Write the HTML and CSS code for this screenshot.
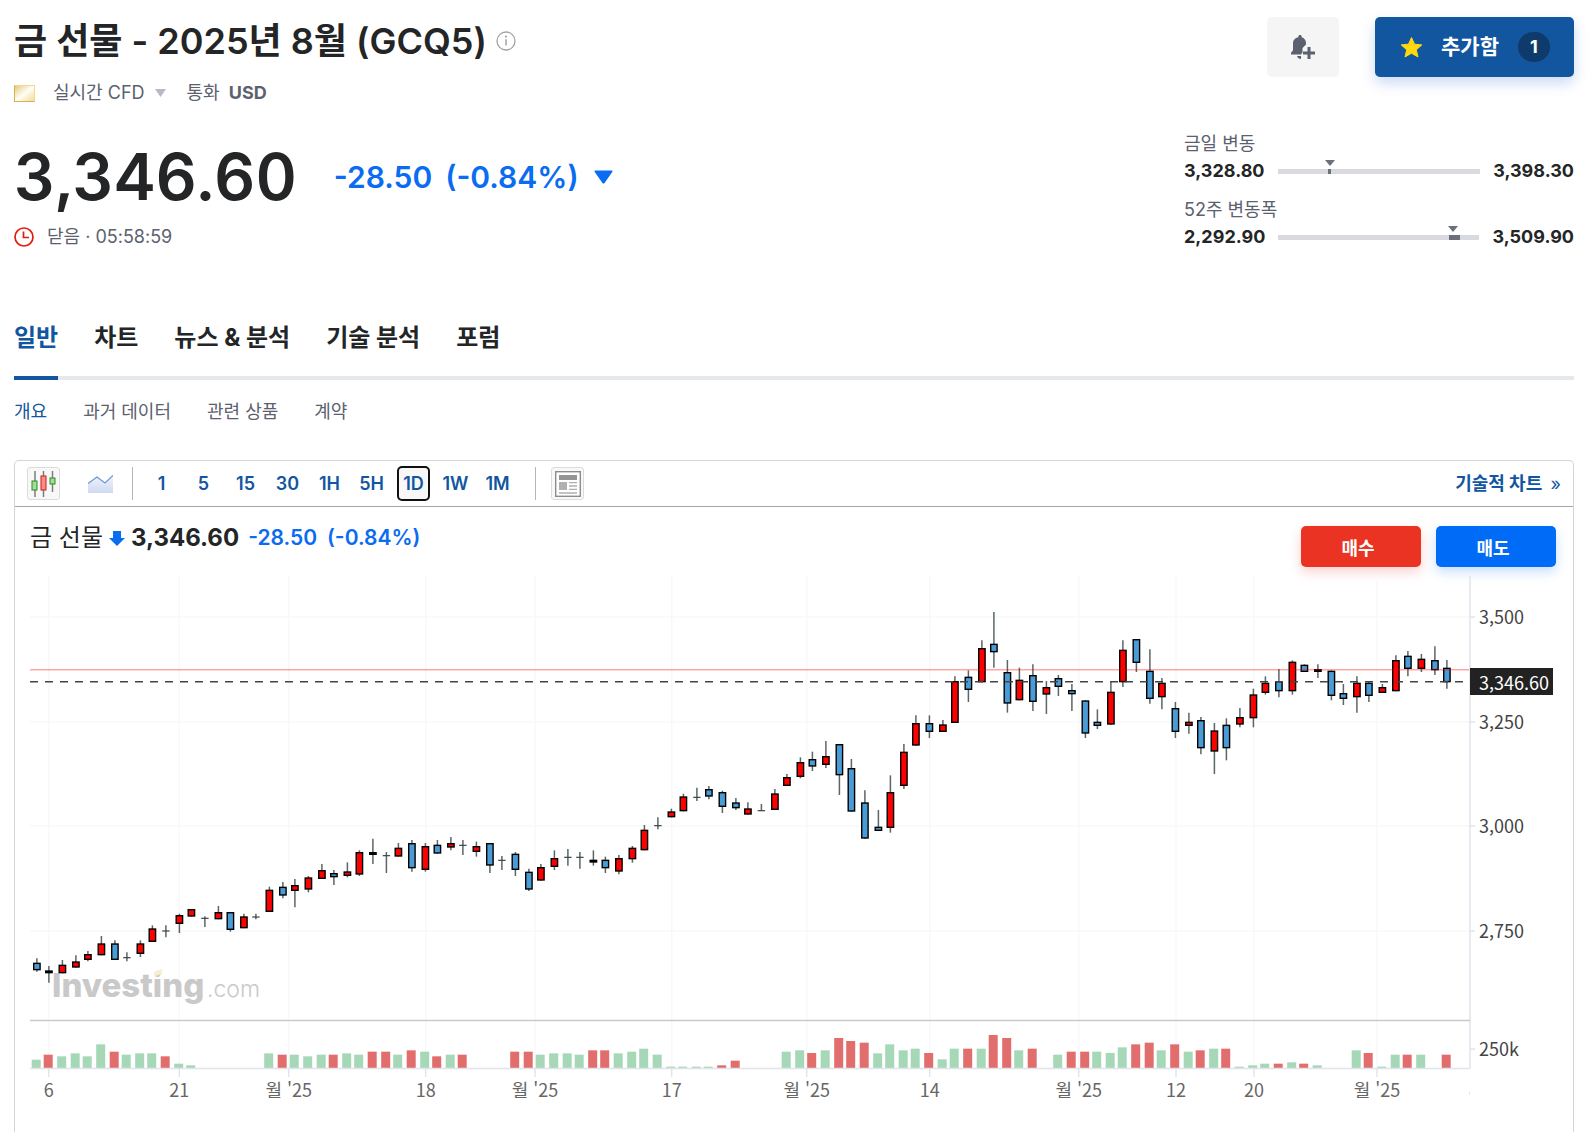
FILE: index.html
```html
<!DOCTYPE html>
<html lang="ko">
<head>
    <meta charset="UTF-8">
    <meta name="viewport" content="width=device-width, initial-scale=1.0">
    <title>금 선물 - 2025년 8월 (GCQ5)</title>
    <link rel="stylesheet" href="styles.css">
</head>
<body>
    <div class="page">
        <header class="top">
            <div class="instrument">
                <div class="title-row">
                    <h1>금 선물 - 2025년 8월 (GCQ5)</h1>
                    <svg class="info" viewBox="0 0 20 20" width="20" height="20">
                        <circle cx="10" cy="10" r="9" fill="none" stroke="#a3a3a3" stroke-width="1.3"/>
                        <circle cx="10" cy="5.6" r="1.1" fill="#a3a3a3"/>
                        <path d="M10 8.3v6.2" stroke="#a3a3a3" stroke-width="1.5"/>
                    </svg>
                </div>
                <div class="meta">
                    <svg class="gold" viewBox="0 0 21 17" width="21" height="17">
                        <defs>
                            <linearGradient id="gold" x1="0" y1="0" x2="1" y2="1">
                                <stop offset="0" stop-color="#e6c97c"/>
                                <stop offset=".5" stop-color="#fffdf6"/>
                                <stop offset="1" stop-color="#f3dc9c"/>
                            </linearGradient>
                        </defs>
                        <rect width="21" height="17" fill="#d3b25c"/>
                        <path d="M0 0h21v17l-1-1V1H1z" fill="#f3d98c"/>
                        <rect x="1" y="1" width="19" height="15" fill="url(#gold)"/>
                    </svg>
                    <button class="feed" type="button">실시간 CFD
                        <svg viewBox="0 0 11 8" width="11" height="8"><path d="M0 0h11L5.500 8z" fill="#b5bbc5"/></svg>
                    </button>
                    <span class="currency">통화 <b>USD</b></span>
                </div>
            </div>
            <div class="actions">
                <button class="alert-btn" type="button" aria-label="알림">
                    <svg viewBox="0 0 24 24" width="24" height="24" fill="#5b616e">
                        <path d="M9 0c1 0 1.700.7 1.700 1.700v.5c2.700.8 4.300 3 4.300 5.800v1.600L11.500 13v4.500l-1.500 2H0v-1.800l2-2.400V8c0-2.800 1.800-5 5.300-5.800v-.5C7.300.7 8 0 9 0z"/>
                        <path d="M6 21h4v3c-2 0-3.500-1.200-4-3z"/>
                        <path d="M16.500 12h3v4.500H24v3h-4.500V24h-3v-4.500H12v-3h4.500z"/>
                    </svg>
                </button>
                <button class="add-btn" type="button">
                    <svg viewBox="0 0 21 21" width="21" height="21"><path d="M10.500.5l3 6.700 7.300.7-5.500 4.900 1.700 7.200-6.500-3.800L4 20l1.700-7.200L.2 7.900l7.300-.7z" fill="#ffd90f" stroke="#ffd90f" stroke-linejoin="round"/></svg>
                    추가함
                    <span class="badge">1</span>
                </button>
            </div>
        </header>

        <section class="quote">
            <div>
                <div class="price-row">
                    <span class="price">3,346.60</span>
                    <span class="change"><span>-28.50</span><span>(-0.84%)</span></span>
                    <svg viewBox="0 0 19 14" width="19" height="14"><path d="M1 .5h17q1 .5.400 1.300L10.600 13q-1.100 1-2.200 0L.6 1.800Q0 1 1 .5z" fill="#0a6cf0"/></svg>
                </div>
                <div class="status">
                    <svg viewBox="0 0 20 20" width="20" height="20" fill="none" stroke="#e01b0c" stroke-width="1.700">
                        <circle cx="10" cy="10" r="9"/>
                        <path d="M9.500 4.500v6H15"/>
                    </svg>
                    닫음 · 05:58:59
                </div>
            </div>
            <div class="ranges">
                <div class="range">
                    <div class="range-label">금일 변동</div>
                    <div class="range-row">
                        <span>3,328.80</span>
                        <div class="bar"><i class="mark" style="left: 25%; width: 3px"></i><i class="caret" style="left: 26%"></i></div>
                        <span>3,398.30</span>
                    </div>
                </div>
                <div class="range">
                    <div class="range-label">52주 변동폭</div>
                    <div class="range-row">
                        <span>2,292.90</span>
                        <div class="bar"><i class="mark" style="left: 85%; width: 11px"></i><i class="caret" style="left: 87%"></i></div>
                        <span>3,509.90</span>
                    </div>
                </div>
            </div>
        </section>

        <nav class="tabs">
            <a class="active" href="#">일반</a>
            <a href="#">차트</a>
            <a href="#">뉴스 &amp; 분석</a>
            <a href="#">기술 분석</a>
            <a href="#">포럼</a>
        </nav>
        <nav class="subtabs">
            <a class="active" href="#">개요</a>
            <a href="#">과거 데이터</a>
            <a href="#">관련 상품</a>
            <a href="#">계약</a>
        </nav>

        <section class="card">
            <div class="toolbar">
                <button class="tool boxed" type="button" aria-label="캔들">
                    <svg viewBox="0 0 25 26" width="25" height="26">
                        <path d="M4 0v26M12.500 0v26M21.500 0v21" stroke="#7d7d7d" stroke-width="1.500"/>
                        <rect x="1" y="10" width="5" height="9" fill="#a5dc9b" stroke="#2a8a20"/>
                        <rect x="10" y="5" width="5" height="14" fill="#ff8b85" stroke="#c4211b"/>
                        <rect x="19" y="7" width="5" height="6" fill="#a5dc9b" stroke="#2a8a20"/>
                    </svg>
                </button>
                <button class="tool area" type="button" aria-label="영역">
                    <svg viewBox="0 0 25 18" width="25" height="18">
                        <defs>
                            <linearGradient id="area" x1="0" y1="0" x2="0" y2="1">
                                <stop offset="0" stop-color="#eef3fc"/>
                                <stop offset="1" stop-color="#cfdaf2"/>
                            </linearGradient>
                        </defs>
                        <path d="M0 8.500L9 2l8 6 8-7.500V18H0z" fill="url(#area)"/>
                        <path d="M0 8.500L9 2l8 6 8-7.500" fill="none" stroke="#6d97cc" stroke-width="1.200"/>
                    </svg>
                </button>
                <span class="divider"></span>
                <div class="frames">
                    <button type="button">1</button>
                    <button type="button">5</button>
                    <button type="button">15</button>
                    <button type="button">30</button>
                    <button type="button">1H</button>
                    <button type="button">5H</button>
                    <button class="selected" type="button">1D</button>
                    <button type="button">1W</button>
                    <button type="button">1M</button>
                </div>
                <span class="divider"></span>
                <button class="tool boxed" type="button" aria-label="뉴스">
                    <svg viewBox="0 0 26 26" width="26" height="26">
                        <rect x=".7" y=".7" width="24.600" height="24.600" fill="#fff" stroke="#8c8c8c" stroke-width="1.400"/>
                        <rect x="4" y="4" width="18" height="5" fill="#949494"/>
                        <rect x="4" y="11" width="8" height="8" fill="#b0b0b0"/>
                        <path d="M14 11.700h8M14 15h8M14 18.300h8M4 22h18" stroke="#b0b0b0" stroke-width="1.300"/>
                    </svg>
                </button>
                <a class="tech" href="#">기술적 차트 <span>»</span></a>
            </div>

            <div class="chart-head">
                <div class="chart-quote">
                    <span class="name">금 선물</span>
                    <svg viewBox="0 0 16 15" width="16" height="15"><path d="M4 0h8v7h4l-8 8-8-8h4z" fill="#0a6cf0"/></svg>
                    <span class="last">3,346.60</span>
                    <span class="diff"><span>-28.50</span><span>(-0.84%)</span></span>
                </div>
                <div class="trade">
                    <button class="buy" type="button">매수</button>
                    <button class="sell" type="button">매도</button>
                </div>
            </div>

            <svg class="chart" id="chart" viewBox="0 0 1526 555">
                <g id="grid"></g>
                <g class="watermark">
                    <text class="brand" x="22" y="421">Investing</text>
                    <text class="dotcom" x="177" y="421">.com</text>
                    <path d="M125 395l7-2v5l-7 2z" fill="#fdeccb"/>
                </g>
                <g id="candles"></g>
                <g id="volume"></g>
                <path d="M0 93.700H1440" stroke="#ff0000" stroke-opacity=".35" stroke-width="1.400"/>
                <path d="M0 105.700H1435" stroke="#444" stroke-width="1.400" stroke-dasharray="8 7"/>
                <g id="axes"></g>
                <rect x="1440" y="92" width="83" height="27" fill="#222"/>
                <text class="tag" x="1449" y="114">3,346.60</text>
            </svg>
        </section>
    </div>
    <script src="chart.js"></script>
</body>
</html>
```
FILE: styles.css
```css
* {
    box-sizing: border-box;
}
body {
    margin: 0;
    background: #fff;
    color: #232526;
    font-family: Inter, "Noto Sans CJK KR", sans-serif;
    font-size: 18px;
    line-height: 24px;
}
button {
    border: none;
    padding: 0;
    background: none;
    font: inherit;
    color: inherit;
    cursor: pointer;
}
a {
    color: inherit;
    text-decoration: none;
}
svg {
    display: block;
    flex: none;
}
.page {
    display: flex;
    flex-direction: column;
    min-height: 100vh;
    padding: 17px 19px 0 14px;
}

/* header */
.top {
    display: flex;
    justify-content: space-between;
    align-items: flex-start;
}
.title-row {
    display: flex;
    align-items: center;
    gap: 9px;
    height: 48px;
}
h1 {
    margin: 0;
    font-size: 36px;
    line-height: 48px;
    font-weight: 600;
}
.meta {
    display: flex;
    align-items: center;
    margin-top: 16px;
    color: #5b616e;
}
.feed {
    display: flex;
    align-items: center;
    gap: 10px;
    margin: 0 21px 0 18px;
}
.currency b {
    margin-left: 4px;
    font-weight: 700;
}
.actions {
    display: flex;
    gap: 36px;
}
.alert-btn {
    display: flex;
    align-items: center;
    justify-content: center;
    width: 72px;
    height: 60px;
    border-radius: 5px;
    background: #f5f5f5;
}
.add-btn {
    display: flex;
    align-items: center;
    gap: 19px;
    height: 60px;
    padding: 0 24px 0 26px;
    border-radius: 5px;
    background: #1256a0;
    box-shadow: 0 6px 14px rgba(18, 86, 200, 0.22);
    color: #fff;
    font-size: 21px;
    font-weight: 700;
}
.badge {
    width: 32px;
    height: 30px;
    border-radius: 15px;
    background: #0e3a6c;
    font-size: 18px;
    line-height: 30px;
}

/* price and ranges */
.quote {
    display: flex;
    justify-content: space-between;
    margin-top: 27px;
}
.price-row {
    display: flex;
    align-items: center;
    gap: 15px;
    height: 72px;
    margin-top: 9px;
}
.price {
    margin-right: 22px;
    font-size: 64px;
    font-weight: 600;
    font-variant-numeric: tabular-nums;
}
.change {
    display: flex;
    gap: 13px;
    color: #0a6cf0;
    font-size: 30px;
    font-weight: 600;
}
.status {
    display: flex;
    align-items: center;
    gap: 13px;
    margin-top: 12px;
    color: #5b616e;
}
.ranges {
    display: flex;
    flex-direction: column;
    gap: 12px;
    width: 390px;
}
.range-label {
    color: #5b616e;
}
.range-row {
    display: flex;
    align-items: center;
    justify-content: space-between;
    height: 30px;
    font-weight: 700;
}
.bar {
    position: relative;
    flex: 1;
    height: 5px;
    margin: 0 13px;
    background: #d9dadf;
}
.mark {
    position: absolute;
    top: 0;
    height: 5px;
    background: #6a707c;
}
.caret {
    position: absolute;
    top: -9px;
    margin-left: -5px;
    border: 5px solid transparent;
    border-top: 6px solid #6a707c;
    border-bottom: 0;
}

/* navigation */
.tabs {
    display: flex;
    gap: 36px;
    margin-top: 68px;
    border-bottom: 4px solid #e6e9eb;
    font-size: 24px;
    line-height: 36px;
    font-weight: 700;
}
.tabs a {
    padding-bottom: 20px;
}
.tabs .active {
    margin-bottom: -4px;
    border-bottom: 4px solid #1256a0;
    color: #1256a0;
}
.subtabs {
    display: flex;
    gap: 36px;
    margin-top: 20px;
    color: #5b616e;
}
.subtabs .active {
    color: #1256a0;
}

/* chart card */
.card {
    flex: 1;
    margin-top: 36px;
    border: 1px solid #d5d5d5;
    border-radius: 5px 5px 0 0;
    border-bottom: none;
}
.toolbar {
    display: flex;
    align-items: center;
    height: 46px;
    padding: 0 12px;
    border-bottom: 1px solid #a5a5a5;
    color: #1256a0;
    font-weight: 600;
}
.tool {
    display: flex;
    align-items: center;
    justify-content: center;
    width: 33px;
    height: 33px;
}
.boxed {
    border: 1px solid #dcdcdc;
    border-radius: 3px;
    background: #f8f8f8;
}
.area {
    margin: 0 15px 0 24px;
}
.divider {
    width: 1px;
    height: 33px;
    background: #b5b5b5;
}
.frames {
    display: flex;
    gap: 9px;
    margin: 0 21px 0 12px;
}
.frames button {
    width: 33px;
    height: 35px;
}
.frames .selected {
    border: 2px solid #111;
    border-radius: 5px;
    background: #f8f8f8;
}
.divider + .boxed {
    margin-left: 15px;
}
.tech {
    margin-left: auto;
    font-weight: 700;
}
.tech span {
    margin-left: 4px;
    font-weight: 400;
}
.chart-head {
    display: flex;
    justify-content: space-between;
    padding: 19px 17px 0 15px;
}
.chart-quote {
    display: flex;
    align-items: center;
    height: 24px;
}
.name {
    margin-right: 6px;
    font-size: 24px;
}
.last {
    margin: 0 9px 0 6px;
    font-size: 24px;
    font-weight: 700;
}
.diff {
    display: flex;
    gap: 10px;
    color: #0a6cf0;
    font-size: 21px;
    font-weight: 600;
}
.trade {
    display: flex;
    gap: 15px;
}
.trade button {
    width: 120px;
    height: 41px;
    padding: 4px 6px 0 0;
    border-radius: 5px;
    color: #fff;
    font-weight: 700;
}
.buy {
    background: #ea3323;
    box-shadow: 0 5px 12px rgba(234, 51, 35, 0.22);
}
.sell {
    background: #006bf7;
    box-shadow: 0 5px 12px rgba(0, 107, 247, 0.22);
}
.chart {
    width: calc(100% - 32px);
    margin: 9px 0 0 15px;
    font-family: "Noto Sans CJK KR", sans-serif;
    overflow: hidden;
}
.y-label {
    fill: #444;
}
.x-label {
    fill: #666;
    text-anchor: middle;
}
.tag {
    fill: #fff;
}
.watermark text {
    fill: #c9c9c9;
    font-family: Inter, sans-serif;
}
.watermark .brand {
    font-size: 33px;
    font-weight: 800;
}
.watermark .dotcom {
    font-size: 23px;
    font-weight: 300;
}
```
FILE: chart.js
```javascript
// candles: colour, high, body top, body bottom, low, volume colour, volume
// (r up, b down, k flat, + no body); distances are in thirds of a pixel
const rows = `
b 1147 1160 1183 1187 g 25|k 1170 1183 1192 1220 r 40|r 1152 1166 1192 1192 g 35|r 1138 1156 1175 1175 g 44
r 1125 1134 1152 1156 g 35|r 1080 1102 1138 1138 g 71|b 1093 1102 1152 1152 r 49|+ 1129 1145 1145 1156 g 40
r 1093 1102 1134 1143 g 44|r 1048 1057 1098 1098 g 44|+ 1048 1065 1065 1084 r 35|r 1013 1017 1044 1071 g 13
r 999 999 1022 1022 g 8|+ 1021 1027 1027 1053 g 0|r 990 1008 1030 1030 g 0|b 1008 1008 1062 1067 g 0
r 1013 1021 1057 1057 g 0|+ 1013 1023 1023 1030 g 0|r 932 941 1008 1008 g 44|b 918 932 959 967 r 40
r 909 927 945 994 g 40|r 900 904 941 949 g 35|r 864 882 909 909 g 40|b 882 891 904 927 r 40
r 859 886 900 904 g 44|r 823 828 896 900 g 40|k 788 828 837 864 r 49|+ 828 839 839 891 r 49
r 801 815 842 842 g 40|b 792 801 877 887 r 53|r 801 810 882 887 g 49|b 792 806 833 833 r 35
r 783 801 815 823 g 40|+ 792 808 808 837 r 40|r 797 810 828 842 g 0|b 801 801 869 891 g 0
+ 840 853 853 882 g 0|b 828 833 882 900 r 49|b 878 887 941 945 r 49|r 864 873 914 914 g 40
r 823 846 873 882 g 44|+ 819 844 844 869 g 44|+ 828 844 844 878 g 40|k 823 851 860 869 r 53
b 842 851 877 891 r 53|r 837 846 887 895 g 44|r 810 815 850 860 g 49|r 747 761 823 823 g 58
+ 724 749 749 760 g 40|r 698 706 724 724 g 4|r 653 661 706 706 g 4|+ 635 664 664 675 g 4
b 630 639 662 670 g 4|b 644 648 693 711 r 8|b 666 679 697 702 r 22|r 679 697 716 716 g 0
+ 684 704 704 704 g 0|r 639 652 702 702 g 0|r 594 603 630 630 g 49|r 544 558 603 607 g 53
b 527 549 572 585 r 45|r 495 540 567 576 g 53|b 504 504 598 657 r 90|b 549 576 707 707 r 81
b 643 679 788 788 r 76|b 702 752 765 765 g 44|r 598 648 756 770 g 71|r 504 527 630 639 g 53
r 418 441 509 509 g 58|b 418 441 468 486 r 45|r 432 445 468 468 g 26|r 301 315 441 441 g 58
b 283 302 342 378 r 58|r 193 216 319 319 g 58|b 108 203 229 275 r 99|b 252 288 383 410 r 90
r 275 311 373 373 g 53|b 265 297 378 405 r 58|r 315 333 356 414 g 0|b 297 306 333 360 g 40
b 324 342 355 405 r 49|b 373 373 473 486 r 49|b 400 437 450 459 g 49|r 315 347 446 446 g 45
r 193 221 319 333 g 62|b 189 189 261 288 r 71|b 220 284 369 383 r 76|r 306 320 364 400 g 53
b 378 396 468 486 r 71|r 410 437 450 473 g 49|b 423 432 517 535 r 53|r 441 463 527 594 g 58
b 427 446 517 553 r 58|r 396 423 446 454 g 4|r 338 355 427 454 g 8|r 301 320 351 356 g 13
b 279 315 346 364 r 13|r 253 257 346 356 g 17|b 265 266 288 288 r 13|k 265 279 288 306 g 8
b 283 284 360 373 g 0|b 324 351 369 387 g 0|r 301 320 364 410 g 53|b 315 320 360 378 r 45
r 324 333 351 351 g 4|r 238 252 346 346 g 40|b 225 239 279 301 r 40|r 234 248 279 288 g 40
b 211 252 283 297 g 0|b 252 275 319 338 r 40`.trim().split(/[|\n]/).map(r => r.split(" "));

const yTicks = [[41, "3,500"], [146, "3,250"], [250, "3,000"], [355, "2,750"]];
const xTicks = [
    [18.7, "6"], [149.3, "21"], [258.7, "월 '25"], [395.7, "18"], [505, "월 '25"], [641.7, "17"],
    [776.7, "월 '25"], [899.7, "14"], [1048.7, "월 '25"], [1146, "12"], [1224, "20"], [1347, "월 '25"]
];
const bodyColors = { r: "#ff0000", b: "#4a9cd6", k: "#000" };
const volumeBase = 492;

let candles = "", volume = "", grid = "", axes = "";

rows.forEach(([color, high, top, bottom, low, volColor, vol], i) => {
    const x = 6.9 + Math.floor(i * 8.627 + 0.3) * 1.5;
    const h = high / 3, t = top / 3, b = bottom / 3, l = low / 3;
    candles += `<path d="M${x} ${h}V${l}" stroke="#5a6668" stroke-width="1.5"/>`;
    if (color === "+") {
        candles += `<path d="M${x - 3.7} ${t}h7.4" stroke="#3a4446" stroke-width="1.2"/>`;
    } else {
        candles += `<rect x="${x - 3.2}" y="${t + 0.7}" width="6.4" height="${b - t - 1.4}" fill="${bodyColors[color]}" stroke="#000" stroke-width="1.4"/>`;
    }
    if (vol > 0) {
        volume += `<rect x="${x - 5.2}" y="${volumeBase - vol / 3}" width="9" height="${vol / 3}" fill="${volColor === "g" ? "#a6d8b8" : "#e26d6d"}"/>`;
    }
});

for (const [y, label] of yTicks) {
    grid += `<path d="M0 ${y}H1440" stroke="#f8f8f8" stroke-width="1.5"/>`;
    axes += `<path d="M1440 ${y}h5" stroke="#e1e4ea" stroke-width="1.5"/><text class="y-label" x="1449" y="${y + 7}">${label}</text>`;
}
for (const [x, label] of xTicks) {
    grid += `<path d="M${x} 0V${volumeBase}" stroke="#f8f8f8" stroke-width="1.5"/>`;
    axes += `<path d="M${x} ${volumeBase}v9" stroke="#e1e4ea" stroke-width="1.5"/><text class="x-label" x="${x}" y="521">${label}</text>`;
}
axes += `<path d="M1440 0V492.500M0 492.500H1440M1440 473h5" fill="none" stroke="#e1e4ea" stroke-width="1.5"/>
    <path d="M0 444.500H1440" stroke="#c9c9c9" stroke-width="1.4"/>
    <text class="y-label" x="1449" y="480">250k</text>
    <svg x="0" y="500" width="1440" height="40"><text class="x-label" x="1444" y="21">8</text></svg>`;

document.getElementById("grid").innerHTML = grid;
document.getElementById("candles").innerHTML = candles;
document.getElementById("volume").innerHTML = volume;
document.getElementById("axes").innerHTML = axes;
```
